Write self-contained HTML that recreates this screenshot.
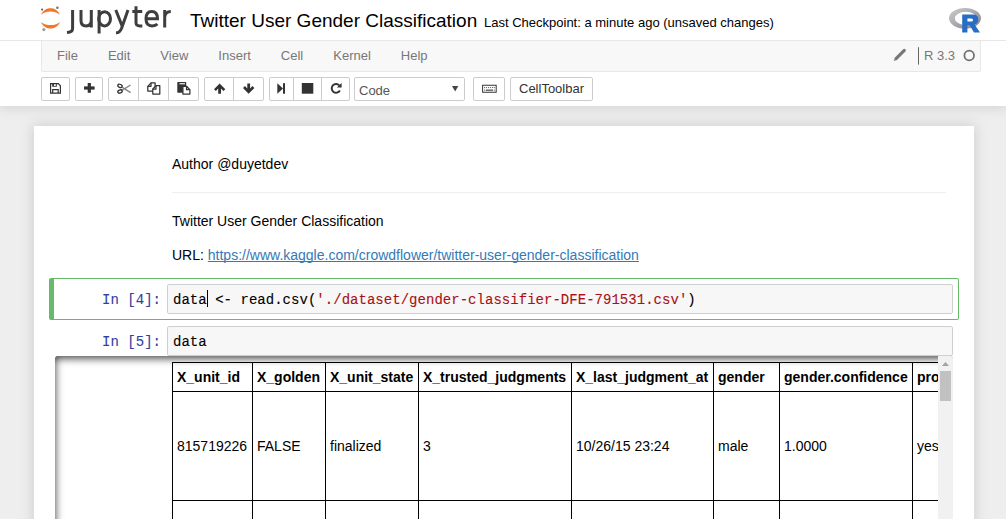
<!DOCTYPE html>
<html><head><meta charset="utf-8">
<style>
*{box-sizing:border-box}
html,body{margin:0;padding:0}
body{width:1006px;height:519px;overflow:hidden;position:relative;background:#eeeeee;font-family:"Liberation Sans",sans-serif;font-size:13px;color:#000}
.abs{position:absolute}
#header{position:absolute;left:0;top:0;width:1006px;height:106px;background:#fff;box-shadow:0 0 12px 1px rgba(87,87,87,0.2);z-index:10}
#hbar{position:absolute;left:0;top:40px;width:1006px;height:1px;background:#e7e7e7}
#title{position:absolute;left:190px;top:10px;font-size:19px;line-height:22px;white-space:pre}
#ckpt{position:absolute;left:484px;top:15px;font-size:13px;line-height:16px;white-space:pre}
#menubar{position:absolute;left:41px;top:40px;width:940px;height:32px;background:#f8f8f8;border:1px solid #e7e7e7;border-radius:0 0 2px 2px}
#menubar ul{margin:0;padding:0;list-style:none;display:flex}
#menubar li{padding:0 15px;line-height:18px;padding-top:6px;color:#777;font-size:13px}
#kinfo{position:absolute;left:924px;top:47px;color:#777;font-size:13px;line-height:18px}
.btn{position:absolute;top:77px;height:24px;border:1px solid #ccc;background:#fff;border-radius:2px}
.sep{position:absolute;top:77px;width:1px;height:24px;background:#ccc}
#site{position:absolute;left:0;top:106px;width:1006px;height:413px;background:#eee}
#nbc{position:absolute;left:34px;top:126px;width:940px;height:500px;background:#fff;box-shadow:0 0 12px 1px rgba(87,87,87,0.2)}
.txt{position:absolute;font-size:14px;line-height:20px;white-space:pre}
.mono{font-family:"Liberation Mono",monospace;font-size:14px;white-space:pre;position:absolute;line-height:17px;-webkit-text-stroke:0.1px currentColor;letter-spacing:0.03px}
.prompt{color:#303F9F}
.inarea{position:absolute;left:167px;width:786px;border:1px solid #cfcfcf;border-radius:2px;background:#f7f7f7}
table{border-collapse:collapse;position:absolute;font-size:14px;table-layout:fixed;width:840px}
th,td{border:1px solid #000;padding:4px;text-align:left;line-height:20px;white-space:nowrap;vertical-align:middle}
th{font-weight:bold}
</style></head><body>
<div id="site"></div>
<div id="nbc"></div>

<!-- notebook content -->
<div class="txt" style="left:172px;top:154px">Author @duyetdev</div>
<div class="abs" style="left:172px;top:192px;width:774px;height:1px;background:#eee"></div>
<div class="txt" style="left:172px;top:211px">Twitter User Gender Classification</div>
<div class="txt" style="left:172px;top:245px">URL: <span style="color:#337ab7;text-decoration:underline;text-decoration-skip-ink:none">https://www.kaggle.com/crowdflower/twitter-user-gender-classification</span></div>

<!-- cell 4 -->
<div class="abs" style="left:49px;top:278px;width:910px;height:42px;border:1px solid #66BB6A;border-left:5px solid #66BB6A;border-radius:2px"></div>
<div class="inarea" style="top:284px;height:30px"></div>
<div class="mono prompt" style="left:102px;top:292px">In [4]:</div>
<div class="mono" style="left:173px;top:292px">data &lt;- read.csv(<span style="color:#a11">'./dataset/gender-classifier-DFE-791531.csv'</span>)</div>
<div class="abs" style="left:207px;top:290px;width:1px;height:17px;background:#000"></div>

<!-- cell 5 -->
<div class="inarea" style="top:326px;height:30px"></div>
<div class="mono prompt" style="left:102px;top:334px">In [5]:</div>
<div class="mono" style="left:173px;top:334px">data</div>

<!-- output -->
<div class="abs" style="left:55px;top:356px;width:898px;height:336px;overflow:hidden;border-radius:2px;background:#fff">
  <div class="abs" style="left:0;top:0;width:883px;height:336px;overflow:hidden">
  <table style="left:117px;top:6px">
  <colgroup><col style="width:80px"><col style="width:73px"><col style="width:93px"><col style="width:153px"><col style="width:142px"><col style="width:66px"><col style="width:133px"><col style="width:120px"></colgroup><tr><th>X_unit_id</th><th>X_golden</th><th>X_unit_state</th><th>X_trusted_judgments</th><th>X_last_judgment_at</th><th>gender</th><th>gender.confidence</th><th>profile_yn</th></tr>
  <tr><td style="height:109px;padding:4px">815719226</td><td>FALSE</td><td>finalized</td><td>3</td><td>10/26/15 23:24</td><td>male</td><td>1.0000</td><td>yes</td></tr>
  <tr><td style="height:109px;padding:4px">815719227</td><td>FALSE</td><td>finalized</td><td>3</td><td>10/26/15 23:30</td><td>male</td><td>1.0000</td><td>yes</td></tr>
  </table>
  </div>
  <div class="abs" style="left:0;top:0;width:898px;height:336px;box-shadow:inset 0 2px 8px rgba(0,0,0,0.8);border-radius:2px;pointer-events:none"></div>
  <div class="abs" style="left:883px;top:0;width:15px;height:336px;background:#f1f1f1"></div>
  <div class="abs" style="left:885px;top:15px;width:11px;height:30px;background:#c1c1c1"></div>
  <svg class="abs" style="left:883px;top:0" width="15" height="15"><path d="M4 10 L7.5 6 L11 10 Z" fill="#a3a3a3"/></svg>
</div>

<div id="header">
  <div id="hbar"></div>
  <div id="title">Twitter User Gender Classification</div>
  <div id="ckpt">Last Checkpoint: a minute ago (unsaved changes)</div>
  <div id="menubar"><ul><li>File</li><li>Edit</li><li>View</li><li>Insert</li><li>Cell</li><li>Kernel</li><li>Help</li></ul></div>
  <div id="kinfo">R 3.3</div>
  <!-- toolbar -->
  <div class="btn" style="left:41px;width:29px"></div>
  <div class="btn" style="left:75px;width:28px"></div>
  <div class="btn" style="left:108px;width:91px"></div><div class="sep" style="left:138px"></div><div class="sep" style="left:168px"></div>
  <div class="btn" style="left:204px;width:60px"></div><div class="sep" style="left:233px"></div>
  <div class="btn" style="left:269px;width:81px"></div><div class="sep" style="left:293px"></div><div class="sep" style="left:321px"></div>
  <div class="btn" style="left:354px;width:111px;border-radius:2px"></div>
  <div class="abs" style="left:359px;top:82px;font-size:13px;line-height:18px;color:#555">Code</div>
  <svg class="abs" style="left:450px;top:84px" width="10" height="9"><path d="M2 2 H8.3 L5.15 7.4 Z" fill="#444"/></svg>
  <div class="btn" style="left:473px;width:32px"></div>
  <div class="btn" style="left:510px;width:83px"></div>
  <div class="abs" style="left:519px;top:80px;font-size:13px;line-height:18px;color:#333">CellToolbar</div>
  <svg class="abs" style="left:0;top:70px" width="360" height="36">
    <g fill="#333">
      <!-- save -->
      <path fill-rule="evenodd" d="M50 13 H58.6 L61 15.4 V23.7 H50 Z M51.2 14.2 V22.5 H59.8 V15.9 L58.1 14.2 Z"/>
      <path fill-rule="evenodd" d="M52.2 13 H56.8 V16.8 H52.2 Z M54 13.9 V15.9 H55.8 V13.9 Z"/>
      <path fill-rule="evenodd" d="M52.1 19 H58.8 V23 H52.1 Z M53.3 20.2 V23 H57.6 V20.2 Z"/>
      <!-- plus -->
      <rect x="84" y="16.4" width="10.6" height="3.2"/><rect x="87.7" y="13" width="3.2" height="9.8"/>
      <!-- up arrow -->
      <path d="M219.6 13.4 L225.3 19.2 L223.3 21 L221 18.6 V23.7 H218.2 V18.6 L215.9 21 L214 19.2 Z"/>
      <!-- down arrow -->
      <path d="M248.6 23.7 L254.4 17.9 L252.4 16.1 L250.1 18.5 V13.4 H247.3 V18.5 L245 16.1 L243 17.9 Z"/>
      <!-- step forward -->
      <path d="M277.3 13.2 L283 18.45 L277.3 23.7 Z"/><rect x="283" y="13.2" width="2" height="10.5"/>
      <!-- stop -->
      <rect x="301.8" y="13" width="11.5" height="10.7"/>
    </g>
    <!-- scissors -->
    <g fill="none" stroke="#333" stroke-width="1.3">
      <ellipse cx="120" cy="15.9" rx="2.3" ry="1.5" transform="rotate(22 120 15.9)"/><ellipse cx="120" cy="21.5" rx="2.3" ry="1.5" transform="rotate(-22 120 21.5)"/>
    </g>
    <g fill="none" stroke="#333" stroke-width="1.4" stroke-opacity="0.6">
      <path d="M122.3 17.4 L130.6 22.6 M122.3 20.2 L130.6 15"/>
    </g>
    <!-- copy -->
    <g fill="#fff" stroke="#333" stroke-width="1.25" stroke-linejoin="round">
      <path d="M151 12.8 H155.1 V21.1 H147.8 V16.3 Z"/><path d="M147.8 16.3 H151 V12.8" fill="none"/>
      <path d="M156 15.6 H159.8 V24.1 H152.8 V19 Z"/><path d="M152.8 19 H156 V15.6" fill="none"/>
    </g>
    <!-- paste -->
    <rect x="177.3" y="12" width="8.9" height="10.7" rx="0.5" fill="#333"/>
    <rect x="179.5" y="13.2" width="5.5" height="1.1" fill="#fff"/>
    <g fill="#fff" stroke="#333" stroke-width="1.25" stroke-linejoin="round">
      <path d="M182.9 16.3 H186.5 L189.9 19.7 V24.1 H182.9 Z"/><path d="M186.5 16.3 V19.7 H189.9" fill="none"/>
    </g>
    <!-- repeat -->
    <path d="M339.9 20.6 A4.4 4.4 0 1 1 339.3 15.3" fill="none" stroke="#333" stroke-width="1.9"/>
    <path d="M341.6 12.9 V17.6 H336.9 Z" fill="#333"/>
  </svg>
  <svg class="abs" style="left:470px;top:80px" width="40" height="20">
    <g fill="#333"><path fill-rule="evenodd" d="M12.1 4.7 H26.7 V12.7 H12.1 Z M13.1 5.7 V11.7 H25.7 V5.7 Z"/>
    <g fill-opacity="0.7"><rect x="14" y="7" width="1.1" height="1.1"/><rect x="16" y="7" width="1.1" height="1.1"/><rect x="18" y="7" width="1.1" height="1.1"/><rect x="20" y="7" width="1.1" height="1.1"/><rect x="22" y="7" width="1.1" height="1.1"/><rect x="23.8" y="7" width="1.1" height="1.1"/>
    <rect x="14" y="9.6" width="1.1" height="1.1"/><rect x="23.8" y="9.6" width="1.1" height="1.1"/></g><rect x="15.8" y="9.6" width="7.2" height="1.1"/></g>
  </svg>
  <!-- jupyter logo -->
  <svg class="abs" style="left:0;top:0" width="180" height="40">
    <path d="M41 14.8 C43 10 47 8.2 50.5 8.2 C54 8.2 58 10 60 14.8 C57 12.4 54 11.6 50.5 11.6 C47 11.6 44 12.4 41 14.8 Z" fill="#f37726"/>
    <path d="M41 21.9 C43 26.7 47 28.5 50.5 28.5 C54 28.5 58 26.7 60 21.9 C57 24.3 54 25.1 50.5 25.1 C47 25.1 44 24.3 41 21.9 Z" fill="#f37726"/>
    <circle cx="42.1" cy="9.6" r="1.1" fill="#616262"/>
    <circle cx="57.4" cy="7.8" r="1.3" fill="#767677"/>
    <circle cx="43.9" cy="29.6" r="1.6" fill="#9e9e9e"/>
    <g fill="none" stroke="#3e3e3e" stroke-width="3.0">
      <path d="M72.6 10 V28.5 Q72.6 32.2 67 32.6"/>
      <path d="M81 10 V20.5 Q81 25.9 86.2 25.9 Q91.3 25.9 91.3 20 M91.3 10 V27.5"/>
      <path d="M99.1 10 V33.5"/>
      <ellipse cx="104.6" cy="18.8" rx="5.9" ry="7.1"/>
      <path d="M115.8 10 L122.3 26.5 M128 10 L121.5 28.5 Q119.6 33 116 32.8"/>
      <path d="M136 6.2 V22.5 Q136 26 140 25.9 L142.3 25.9 M132.3 11.5 H142.2"/>
      <path d="M145.9 18.7 H157.5 Q157.5 11.6 151.7 11.6 Q146 11.6 146 18.8 Q146 25.9 152 25.9 Q155.6 25.9 157.4 24"/>
      <path d="M164.7 10 V27.5 M164.7 17 Q165.5 11.6 170.8 11.6"/>
    </g>
  </svg>
  <!-- R logo -->
  <svg class="abs" style="left:940px;top:0" width="50" height="40">
    <defs><linearGradient id="rg" x1="0" y1="0" x2="1" y2="1"><stop offset="0" stop-color="#cbced0"/><stop offset="1" stop-color="#84838b"/></linearGradient></defs>
    <path fill-rule="evenodd" fill="url(#rg)" d="M9 18.3 A16 10.4 0 1 0 41 18.3 A16 10.4 0 1 0 9 18.3 Z M14.8 18.3 A11 6.6 0 1 0 36.8 18.3 A11 6.6 0 1 0 14.8 18.3 Z"/>
    <path fill="#276dc3" fill-rule="evenodd" d="M22.2 14.5 H33 Q38.3 14.5 38.3 19.6 Q38.3 23.4 34.6 24.6 L40 32.5 H34 L29.6 25.2 H27.4 V32.5 H22.2 Z M27.4 18.6 V21.6 H31.5 Q33 21.6 33 20.1 Q33 18.6 31.5 18.6 Z"/>
  </svg>
  <!-- kernel indicator -->
  <svg class="abs" style="left:890px;top:45px" width="90" height="22">
    <path d="M3.8 15.9 L4.67 12.77 L13.17 4.27 Q14.3 3.4 15.43 4.27 Q16.3 5.4 15.43 6.53 L6.93 15.03 Z" fill="#777"/>
    <path d="M4.2 14.4 L5.4 15.6" stroke="#ccc" stroke-width="1"/>
    <rect x="28" y="2.2" width="1" height="17.4" fill="#666"/>
    <circle cx="79.2" cy="10.5" r="4.8" fill="none" stroke="#707070" stroke-width="1.8"/>
  </svg>
</div>
</body></html>
